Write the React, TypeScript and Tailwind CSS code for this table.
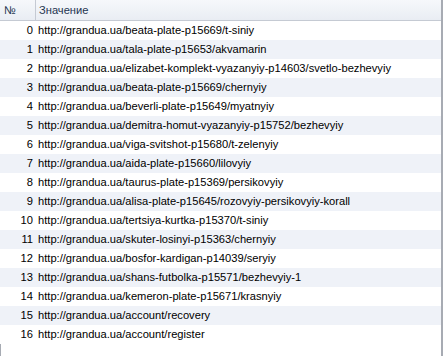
import React from "react";

const urls = [
  "http://grandua.ua/beata-plate-p15669/t-siniy",
  "http://grandua.ua/tala-plate-p15653/akvamarin",
  "http://grandua.ua/elizabet-komplekt-vyazanyiy-p14603/svetlo-bezhevyiy",
  "http://grandua.ua/beata-plate-p15669/chernyiy",
  "http://grandua.ua/beverli-plate-p15649/myatnyiy",
  "http://grandua.ua/demitra-homut-vyazanyiy-p15752/bezhevyiy",
  "http://grandua.ua/viga-svitshot-p15680/t-zelenyiy",
  "http://grandua.ua/aida-plate-p15660/lilovyiy",
  "http://grandua.ua/taurus-plate-p15369/persikovyiy",
  "http://grandua.ua/alisa-plate-p15645/rozovyiy-persikovyiy-korall",
  "http://grandua.ua/tertsiya-kurtka-p15370/t-siniy",
  "http://grandua.ua/skuter-losinyi-p15363/chernyiy",
  "http://grandua.ua/bosfor-kardigan-p14039/seryiy",
  "http://grandua.ua/shans-futbolka-p15571/bezhevyiy-1",
  "http://grandua.ua/kemeron-plate-p15671/krasnyiy",
  "http://grandua.ua/account/recovery",
  "http://grandua.ua/account/register",
];

export default function App() {
  return (
    <div
      className="w-[443px] h-[356px] bg-white flex flex-col overflow-hidden text-[11.15px] text-black"
      style={{ fontFamily: '"Liberation Sans", Arial, sans-serif' }}
    >
      <div className="flex flex-1 flex-col border-r-2 border-[#a7abb3]">
        <div className="flex h-[21px] shrink-0 border-b border-[#c5cad3] bg-gradient-to-b from-[#f6f8fb] to-[#e9edf3] text-[#1e3450]">
          <div className="w-[36px] shrink-0 border-r border-[#c5cad3] pl-[4px] leading-[20px]">№</div>
          <div className="flex-1 pl-[3px] leading-[20px]">Значение</div>
        </div>
        {urls.map((u, i) => (
          <div
            key={i}
            className={`flex h-[19px] shrink-0 leading-[19px] ${i % 2 === 1 ? "bg-[#eff2f8]" : "bg-white"}`}
          >
            <div className="w-[34px] shrink-0 text-right pr-[1px]">{i}</div>
            <div className="flex-1 pl-[4px] whitespace-nowrap">{u}</div>
          </div>
        ))}
        <div className="flex-1 border-l border-[#a7abb3]" />
      </div>
    </div>
  );
}
